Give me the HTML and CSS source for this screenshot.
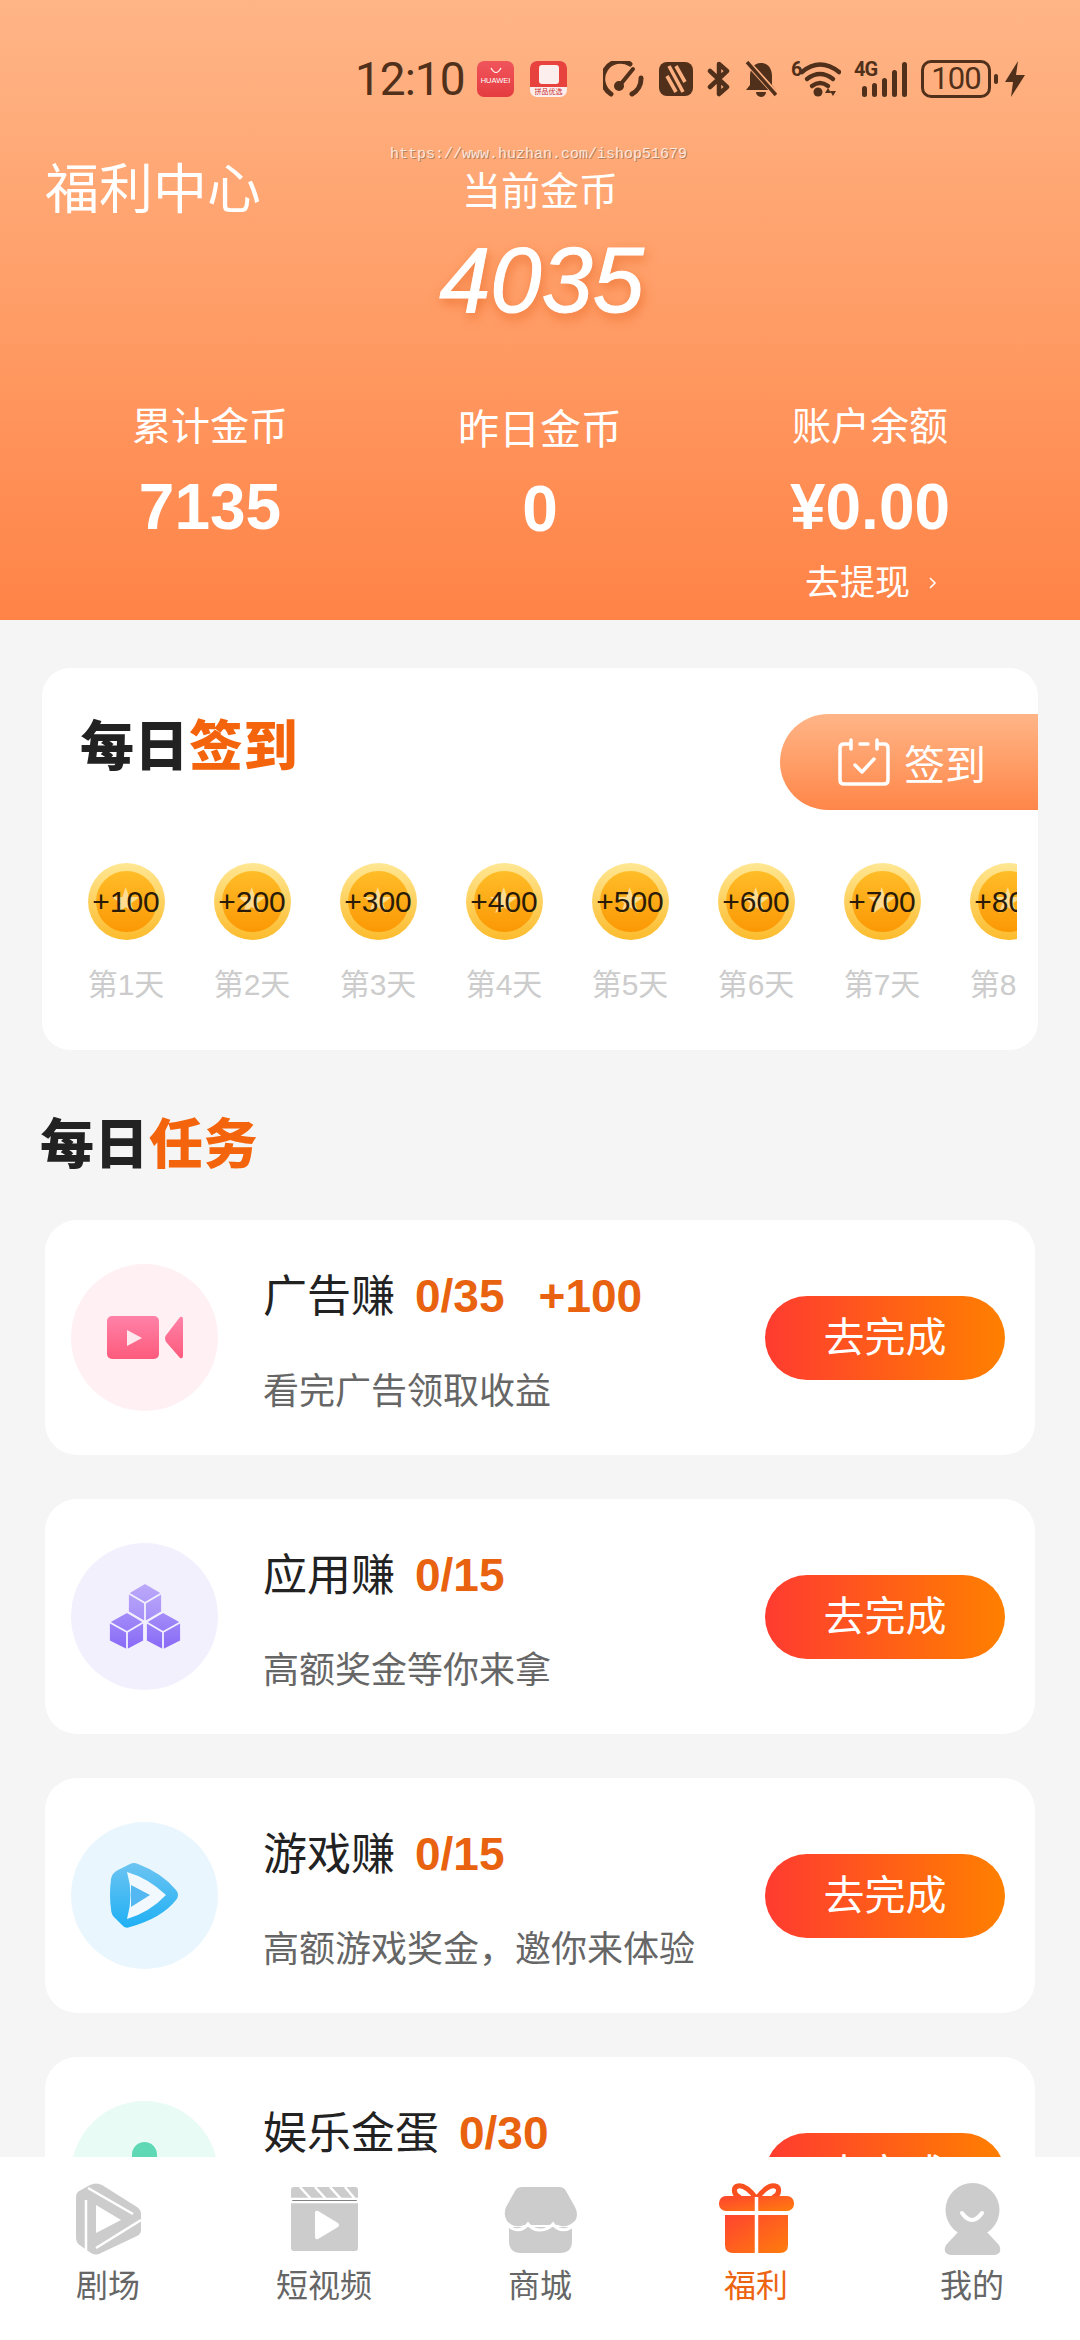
FILE: index.html
```html
<!DOCTYPE html>
<html lang="zh-CN">
<head>
    <meta charset="UTF-8">
    <meta name="viewport" content="width=device-width, initial-scale=1.0">
    <title>福利中心</title>
    <link rel="stylesheet" href="styles.css">
</head>
<body>
    <!-- 顶部 -->
    <header class="hero">
        <div class="status">
            <span class="status-time">12:10</span>
            <div class="status-apps">
                <div class="app-icon app-huawei">
                    <svg width="14" height="8" viewBox="0 0 14 8"><path d="M2 1 Q7 10 12 1" fill="none" stroke="#fff" stroke-width="1.2"/></svg>
                    <span>HUAWEI</span>
                </div>
                <div class="app-icon app-shop">
                    <div class="app-shop-top"><i></i></div>
                    <span>拼品优选</span>
                </div>
            </div>
            <div class="status-icons">
                <svg width="42" height="36" viewBox="0 0 42 36" fill="none" stroke="#50301a" stroke-width="5" stroke-linecap="round">
                    <path d="M8 33 A17.5 17.5 0 0 1 27 3"/>
                    <path d="M38 17 A17.5 17.5 0 0 1 29 33"/>
                    <path d="M17 24 L30 8" stroke-width="4"/>
                    <circle cx="16" cy="25" r="2.5" fill="#50301a"/>
                </svg>
                <svg width="34" height="34" viewBox="0 0 34 34" fill="none">
                    <rect width="34" height="34" rx="8" fill="#50301a"/>
                    <path d="M10 4 L24 30 M17 4 L26 20 M17 30 L8 14" stroke="#ffb081" stroke-width="3.6"/>
                </svg>
                <svg width="24" height="36" viewBox="0 0 24 36" fill="none" stroke="#50301a" stroke-width="4.5" stroke-linejoin="round" stroke-linecap="round">
                    <path d="M3 10 L20 26 L12 33 V3 L20 10 L3 26"/>
                </svg>
                <svg width="32" height="36" viewBox="0 0 32 36">
                    <path d="M16 2 C24 2 27 9 27 15 V24 L31 29 H1 L5 24 V15 C5 9 8 2 16 2Z" fill="#50301a"/>
                    <path d="M11 31 H21 A5 5 0 0 1 11 31Z" fill="#50301a"/>
                    <path d="M3 2 L31 33" stroke="#ffb081" stroke-width="6"/>
                    <path d="M2 1 L31 34" stroke="#50301a" stroke-width="3.5"/>
                </svg>
                <div class="status-wifi">
                    <span class="wifi-six">6</span>
                    <svg width="50" height="36" viewBox="0 0 50 36" fill="none" stroke="#50301a" stroke-width="4.5" stroke-linecap="round">
                        <path d="M11 11 Q29 -4 48 11"/>
                        <path d="M16 18 Q29 8 42 18"/>
                        <path d="M21 25 Q29 19 37 25"/>
                        <circle cx="27" cy="31" r="4.5" fill="#50301a" stroke="none"/>
                        <path d="M37 27 L34 32 H40Z M42 35 L39 30 H45Z" fill="#50301a" stroke="none"/>
                    </svg>
                </div>
                <div class="status-signal">
                    <span class="signal-4g">4G</span>
                    <i class="bar1"></i><i class="bar2"></i><i class="bar3"></i><i class="bar4"></i><i class="bar5"></i>
                </div>
                <div class="status-battery">100</div>
                <svg width="20" height="36" viewBox="0 0 20 36"><path d="M13 0 L0 21 H8 L6 36 L20 14 H11Z" fill="#50301a"/></svg>
            </div>
        </div>

        <div class="watermark">https://www.huzhan.com/ishop51679</div>

        <div class="hero-top">
            <h1 class="hero-title">福利中心</h1>
            <div class="current">
                <div class="current-label">当前金币</div>
                <div class="current-value">4035</div>
            </div>
        </div>

        <div class="stats">
            <div class="stat">
                <div class="stat-label">累计金币</div>
                <div class="stat-value">7135</div>
            </div>
            <div class="stat stat-mid">
                <div class="stat-label">昨日金币</div>
                <div class="stat-value">0</div>
            </div>
            <div class="stat">
                <div class="stat-label">账户余额</div>
                <div class="stat-value">¥0.00</div>
                <div class="stat-link">去提现
                    <svg width="9" height="14" viewBox="0 0 9 14" fill="none" stroke="#fff" stroke-width="1.6"><path d="M2 2 L7 7 L2 12"/></svg>
                </div>
            </div>
        </div>
    </header>

    <!-- 内容 -->
    <main class="content">
        <section class="sign-card">
            <div class="sign-head">
                <h2 class="heading">每日<em>签到</em></h2>
                <div class="sign-btn">
                    <svg width="52" height="48" viewBox="0 0 52 48" fill="none" stroke="#fff" stroke-width="3.5" stroke-linecap="round" stroke-linejoin="round">
                        <path d="M11 6 H6 Q2 6 2 10 V42 Q2 46 6 46 H46 Q50 46 50 42 V10 Q50 6 46 6 H41"/>
                        <path d="M13 2 V11 M39 2 V11 M22 6 H30"/>
                        <path d="M17 27 L24 34 L36 21"/>
                    </svg>
                    <span>签到</span>
                </div>
            </div>
            <div class="coins">
                <div class="coin-item"><div class="coin"><span>+100</span></div><div class="coin-day">第1天</div></div>
                <div class="coin-item"><div class="coin"><span>+200</span></div><div class="coin-day">第2天</div></div>
                <div class="coin-item"><div class="coin"><span>+300</span></div><div class="coin-day">第3天</div></div>
                <div class="coin-item"><div class="coin"><span>+400</span></div><div class="coin-day">第4天</div></div>
                <div class="coin-item"><div class="coin"><span>+500</span></div><div class="coin-day">第5天</div></div>
                <div class="coin-item"><div class="coin"><span>+600</span></div><div class="coin-day">第6天</div></div>
                <div class="coin-item"><div class="coin"><span>+700</span></div><div class="coin-day">第7天</div></div>
                <div class="coin-item"><div class="coin"><span>+800</span></div><div class="coin-day">第8天</div></div>
            </div>
        </section>

        <h2 class="heading tasks-heading">每日<em>任务</em></h2>

        <section class="task">
            <div class="task-icon icon-pink">
                <svg width="76" height="43" viewBox="0 0 76 43">
                    <defs>
                        <linearGradient id="pinkFill" x1="0" y1="0" x2="0" y2="1">
                            <stop offset="0" stop-color="#ff82a8"/>
                            <stop offset="1" stop-color="#fd5b7c"/>
                        </linearGradient>
                    </defs>
                    <rect width="52" height="43" rx="5" fill="url(#pinkFill)"/>
                    <path d="M20 14 L35 22 L20 30Z" fill="#ffe9ee"/>
                    <path d="M58 22 Q58 20 60 18 L73 1 Q76 0 76 3 V40 Q76 43 73 42 L60 27 Q58 25 58 22Z" fill="url(#pinkFill)"/>
                </svg>
            </div>
            <div class="task-text">
                <div class="task-title">广告赚<b>0/35</b><b class="task-bonus">+100</b></div>
                <p class="task-sub">看完广告领取收益</p>
            </div>
            <div class="task-btn">去完成</div>
        </section>

        <section class="task">
            <div class="task-icon icon-purple">
                <svg width="72" height="67" viewBox="0 0 72 67">
                    <defs>
                        <linearGradient id="cubeTop" x1="0" y1="0" x2="0" y2="1">
                            <stop offset="0" stop-color="#bcaafa"/>
                            <stop offset="1" stop-color="#a48ef8"/>
                        </linearGradient>
                        <linearGradient id="cubeLow" x1="0" y1="0" x2="0" y2="1">
                            <stop offset="0" stop-color="#a48ef8"/>
                            <stop offset="1" stop-color="#8768f6"/>
                        </linearGradient>
                    </defs>
                    <g stroke="#f3f0fe" stroke-width="1.8" stroke-linejoin="round">
                        <path d="M36 0 L53 10 V29 L36 39 L19 29 V10Z" fill="url(#cubeTop)"/>
                        <path d="M19 10 L36 20 L53 10 M36 20 V39" fill="none"/>
                        <path d="M18 29 L35 39 V58 L18 67 L0 58 V39Z" fill="url(#cubeLow)"/>
                        <path d="M0 39 L18 49 L35 39 M18 49 V67" fill="none"/>
                        <path d="M54 29 L72 39 V58 L54 67 L37 58 V39Z" fill="url(#cubeLow)"/>
                        <path d="M37 39 L54 49 L72 39 M54 49 V67" fill="none"/>
                    </g>
                </svg>
            </div>
            <div class="task-text">
                <div class="task-title">应用赚<b>0/15</b></div>
                <p class="task-sub">高额奖金等你来拿</p>
            </div>
            <div class="task-btn">去完成</div>
        </section>

        <section class="task">
            <div class="task-icon icon-blue">
                <svg width="69" height="65" viewBox="0 0 69 65">
                    <defs>
                        <linearGradient id="blueFill" x1="0" y1="0" x2="0" y2="1">
                            <stop offset="0" stop-color="#6cc4f2"/>
                            <stop offset="1" stop-color="#1fb0f4"/>
                        </linearGradient>
                    </defs>
                    <path d="M20 1 Q24 -1 28 1 Q52 10 66 27 Q70 32 66 37 Q52 55 20 64 Q15 66 12 62 L6 56 Q1 52 1 46 Q-1 32 1 16 Q2 10 8 7Z" fill="url(#blueFill)"/>
                    <path d="M17 9 Q38 15 56 32 Q40 49 17 56 Q24 32 17 9Z" fill="#f1f9fe"/>
                    <path d="M21 22 L40 32 L21 44Z" fill="#53b8f2"/>
                </svg>
            </div>
            <div class="task-text">
                <div class="task-title">游戏赚<b>0/15</b></div>
                <p class="task-sub">高额游戏奖金，邀你来体验</p>
            </div>
            <div class="task-btn">去完成</div>
        </section>

        <section class="task">
            <div class="task-icon icon-green"><i class="egg"></i></div>
            <div class="task-text">
                <div class="task-title">娱乐金蛋<b>0/30</b></div>
                <p class="task-sub">&nbsp;</p>
            </div>
            <div class="task-btn">去完成</div>
        </section>
    </main>

    <!-- 底部导航 -->
    <nav class="tabbar">
        <div class="tab">
            <svg width="65" height="72" viewBox="0 0 65 72">
                <path d="M14 2 Q20 -1 26 2 L61 24 Q65 27 65 31 V47 Q65 51 61 53 L25 70 Q20 73 15 70 L5 63 Q0 60 0 55 V14 Q0 9 5 7Z" fill="#ccc"/>
                <path d="M12 5 L57 31 M65 37 L20 65 M10 17 V67" stroke="#fff" stroke-width="2.5" fill="none"/>
                <path d="M20 22 L45 37 L20 50Z" fill="#fff"/>
            </svg>
            <span>剧场</span>
        </div>
        <div class="tab">
            <svg width="67" height="72" viewBox="0 0 67 72">
                <rect y="4" width="67" height="64" rx="3" fill="#ccc"/>
                <path d="M0 16 H67 V19 H0Z M9 4 L20 16 M24 4 L35 16 M39 4 L50 16 M54 4 L64 16" stroke="#fff" stroke-width="2.5"/>
                <path d="M24 30 Q24 27 27 28 L47 40 Q49 42 47 44 L27 56 Q24 57 24 54Z" fill="#fff"/>
            </svg>
            <span>短视频</span>
        </div>
        <div class="tab">
            <svg width="73" height="72" viewBox="0 0 73 72">
                <path d="M18 4 H55 Q60 4 62 8 L71 24 Q75 32 71 38 Q62 46 54 42 L38 42 L20 42 Q10 46 3 38 Q-1 32 2 24 L11 8 Q13 4 18 4Z" fill="#ccc"/>
                <path d="M5 44 H68 V58 Q68 70 56 70 H17 Q5 70 5 58Z" fill="#ccc"/>
                <path d="M1 39 C8 49 18 49 24 41 C30 49 42 49 49 41 C55 49 65 49 72 39" fill="none" stroke="#fff" stroke-width="3"/>
            </svg>
            <span>商城</span>
        </div>
        <div class="tab tab-active">
            <svg width="75" height="72" viewBox="0 0 75 72">
                <defs>
                    <linearGradient id="giftFill" x1="0" y1="0" x2="1" y2="1">
                        <stop offset="0" stop-color="#ff4430"/>
                        <stop offset="1" stop-color="#ff7d0c"/>
                    </linearGradient>
                </defs>
                <path d="M37 15 C30 6 24 2 19 3 C14 4 14 11 20 14 M38 15 C45 6 51 2 56 3 C61 4 61 11 55 14" fill="none" stroke="#f9501f" stroke-width="5" stroke-linecap="round"/>
                <rect y="13" width="75" height="15" rx="7" fill="url(#giftFill)"/>
                <path d="M6 32 H69 V62 Q69 70 61 70 H14 Q6 70 6 62Z" fill="url(#giftFill)"/>
                <path d="M37.5 14 V71" stroke="#fff" stroke-width="3.5"/>
            </svg>
            <span>福利</span>
        </div>
        <div class="tab">
            <svg width="57" height="72" viewBox="0 0 57 72">
                <circle cx="28.5" cy="27" r="27" fill="#ccc"/>
                <path d="M17 46 H40 L55 62 Q59 71 50 72 H7 Q-2 71 2 62Z" fill="#ccc"/>
                <path d="M18 30 Q28 44 38 30" fill="none" stroke="#fff" stroke-width="4" stroke-linecap="round"/>
            </svg>
            <span>我的</span>
        </div>
    </nav>
</body>
</html>
```

FILE: styles.css
```css
* {
    margin: 0;
    padding: 0;
    box-sizing: border-box;
}

body {
    width: 1080px;
    height: 2340px;
    overflow: hidden;
    display: flex;
    flex-direction: column;
    position: relative;
    background: #f5f5f5;
    font-family: "Liberation Sans", "Noto Sans CJK SC", sans-serif;
    color: #222;
}

/* 顶部 */
.hero {
    flex: none;
    height: 620px;
    padding-top: 56px;
    position: relative;
    background: linear-gradient(180deg, #ffb587 0%, #ffa26d 40%, #ff8347 100%);
    color: #fff;
}

.status {
    height: 46px;
    padding-left: 355px;
    display: flex;
    align-items: center;
    color: #50301a;
}

.status-time {
    width: 110px;
    font-family: Roboto, sans-serif;
    font-size: 46px;
    letter-spacing: -1px;
    white-space: nowrap;
}

.status-apps {
    display: flex;
    gap: 16px;
    margin-left: 12px;
}

.app-icon {
    width: 37px;
    height: 36px;
    border-radius: 7px;
    overflow: hidden;
    text-align: center;
}

.app-huawei {
    display: flex;
    flex-direction: column;
    align-items: center;
    padding-top: 6px;
    background: linear-gradient(180deg, #f0555c, #e43c40);
    color: #fff;
    font-size: 7.5px;
    line-height: 12px;
}

.app-shop {
    background: #fdeeee;
    color: #c9302f;
    font-size: 7px;
    line-height: 10px;
}

.app-shop-top {
    height: 26px;
    padding-top: 4px;
    background: #e8423f;
}

.app-shop-top i {
    display: block;
    width: 20px;
    height: 19px;
    margin: 0 auto;
    border-radius: 3px;
    background: #fdeeee;
}

.status-icons {
    display: flex;
    align-items: center;
    gap: 14px;
    margin-left: 36px;
}

.status-wifi {
    width: 50px;
    height: 36px;
    position: relative;
}

.wifi-six {
    position: absolute;
    left: 0;
    top: -2px;
    font-family: Roboto, sans-serif;
    font-size: 20px;
    font-weight: bold;
    line-height: 20px;
}

.status-signal {
    width: 52px;
    height: 36px;
    position: relative;
    display: flex;
    align-items: flex-end;
    gap: 4.5px;
    padding-left: 7px;
}

.signal-4g {
    position: absolute;
    left: -1px;
    top: -2px;
    font-family: Roboto, sans-serif;
    font-size: 20px;
    font-weight: bold;
    line-height: 20px;
    letter-spacing: -1px;
}

.status-signal i {
    width: 5.5px;
    border-radius: 3px;
    background: #50301a;
}

.bar1 { height: 11px; }
.bar2 { height: 14px; }
.bar3 { height: 19px; }
.bar4 { height: 27px; }
.bar5 { height: 35px; }

.status-battery {
    width: 70px;
    height: 38px;
    position: relative;
    border: 3px solid #50301a;
    border-radius: 10px;
    font-family: Roboto, sans-serif;
    font-size: 31px;
    line-height: 31px;
    text-align: center;
    letter-spacing: -1px;
}

.status-battery::after {
    content: "";
    position: absolute;
    right: -10px;
    top: 11px;
    width: 4px;
    height: 10px;
    border-radius: 2px;
    background: #50301a;
}

.watermark {
    position: absolute;
    left: 390px;
    top: 146px;
    font-family: "Liberation Mono", monospace;
    font-size: 15px;
    line-height: 18px;
    color: rgba(255, 255, 255, 0.75);
    text-shadow: 1px 1px 0 rgba(120, 90, 70, 0.55);
    white-space: nowrap;
}

.hero-top,
.stats {
    display: grid;
    grid-template-columns: repeat(3, 1fr);
    padding: 0 45px;
}

.hero-top {
    margin-top: 60px;
}

.hero-title {
    padding-top: 3px;
    font-size: 54px;
    font-weight: 400;
    line-height: 50px;
    white-space: nowrap;
}

.current {
    text-align: center;
}

.current-label {
    font-size: 39px;
    line-height: 60px;
}

.current-value {
    margin-top: 3px;
    padding-left: 3px;
    font-size: 92px;
    font-style: italic;
    line-height: 110px;
    -webkit-text-stroke: 1px #fff;
    text-shadow: 2px 5px 12px rgba(226, 92, 22, 0.6);
}

.stats {
    margin-top: 62px;
    text-align: center;
}

.stat-label {
    font-size: 39px;
    line-height: 60px;
}

.stat-value {
    margin-top: 10px;
    font-size: 64px;
    font-weight: bold;
    line-height: 80px;
}

.stat-mid {
    padding-top: 3px;
}

.stat-mid .stat-label {
    font-size: 41px;
}

.stat-mid .stat-value {
    margin-top: 9px;
}

.stat-link {
    display: flex;
    justify-content: center;
    align-items: center;
    gap: 18px;
    margin-top: 11px;
    padding-left: 2px;
    font-size: 35px;
    line-height: 50px;
}

/* 内容 */
.content {
    flex: 1;
    min-height: 0;
    overflow: hidden;
    padding-top: 48px;
}

.sign-card {
    height: 382px;
    margin: 0 42px;
    border-radius: 28px;
    background: #fff;
    overflow: hidden;
}

.sign-head {
    display: flex;
    justify-content: space-between;
    padding: 46px 0 0 38px;
}

.heading {
    margin-top: 3px;
    font-size: 54px;
    font-weight: 900;
    line-height: 60px;
    letter-spacing: 0.5px;
    color: #222;
}

.heading em {
    font-style: normal;
    color: #f4640c;
}

.sign-btn {
    width: 258px;
    height: 96px;
    display: flex;
    align-items: center;
    gap: 14px;
    padding-left: 58px;
    border-radius: 48px 0 0 48px;
    background: linear-gradient(180deg, #ffb587, #ff8649);
    color: #fff;
    font-size: 41px;
}

.coins {
    display: flex;
    margin: 53px 21px 0;
    overflow: hidden;
}

.coin-item {
    flex: none;
    width: 126px;
    text-align: center;
}

.coin {
    width: 77px;
    height: 77px;
    margin: 0 auto;
    position: relative;
    display: flex;
    justify-content: center;
    align-items: center;
    border-radius: 50%;
    background: linear-gradient(180deg, #ffe793, #fcbb2c);
}

.coin::before {
    content: "";
    position: absolute;
    inset: 8px;
    border-radius: 50%;
    background: linear-gradient(180deg, #ffbd28, #fb9804);
}

.coin::after {
    content: "★";
    position: absolute;
    left: 0;
    right: 0;
    top: 18px;
    font-family: "DejaVu Sans", sans-serif;
    font-size: 36px;
    line-height: 40px;
    color: rgba(255, 236, 185, 0.75);
}

.coin span {
    position: relative;
    z-index: 1;
    font-size: 30px;
    color: #2a1a08;
    white-space: nowrap;
}

.coin-day {
    margin-top: 23px;
    font-size: 30px;
    line-height: 44px;
    color: #ccc;
    white-space: nowrap;
}

.tasks-heading {
    margin: 65px 0 45px 40px;
}

.task {
    height: 235px;
    margin: 0 45px 44px;
    padding: 0 30px 0 26px;
    display: flex;
    align-items: center;
    border-radius: 32px;
    background: #fff;
}

.task-icon {
    flex: none;
    width: 147px;
    height: 147px;
    display: flex;
    justify-content: center;
    align-items: center;
    border-radius: 50%;
}

.icon-pink { background: #fff0f3; }
.icon-purple { background: #f3f0fe; }
.icon-blue { background: #eaf6fe; }
.icon-green { background: #e9fbf5; }

.egg {
    display: block;
    width: 25px;
    height: 66px;
    border-radius: 12.5px;
    background: #5fd9b5;
}

.task-text {
    flex: 1;
    margin-left: 45px;
    padding-top: 12px;
}

.task-title {
    font-size: 44px;
    line-height: 60px;
    white-space: nowrap;
}

.task-title b {
    margin-left: 20px;
    font-size: 46px;
    color: #e8620f;
}

.task-title .task-bonus {
    margin-left: 34px;
}

.task-sub {
    margin-top: 35px;
    font-size: 36px;
    line-height: 60px;
    color: #666;
    white-space: nowrap;
}

.task-btn {
    flex: none;
    width: 240px;
    height: 84px;
    border-radius: 42px;
    background: linear-gradient(90deg, #ff3b30, #ff8000);
    color: #fff;
    font-size: 41px;
    line-height: 84px;
    text-align: center;
}

/* 底部导航 */
.tabbar {
    flex: none;
    height: 183px;
    display: flex;
    padding-top: 26px;
    position: relative;
    background: #fff;
}

.tab {
    flex: 1;
    display: flex;
    flex-direction: column;
    align-items: center;
    font-size: 32px;
    line-height: 44px;
    color: #666;
}

.tab span {
    margin-top: 9px;
}

.tab-active {
    color: #ec6412;
}
```
